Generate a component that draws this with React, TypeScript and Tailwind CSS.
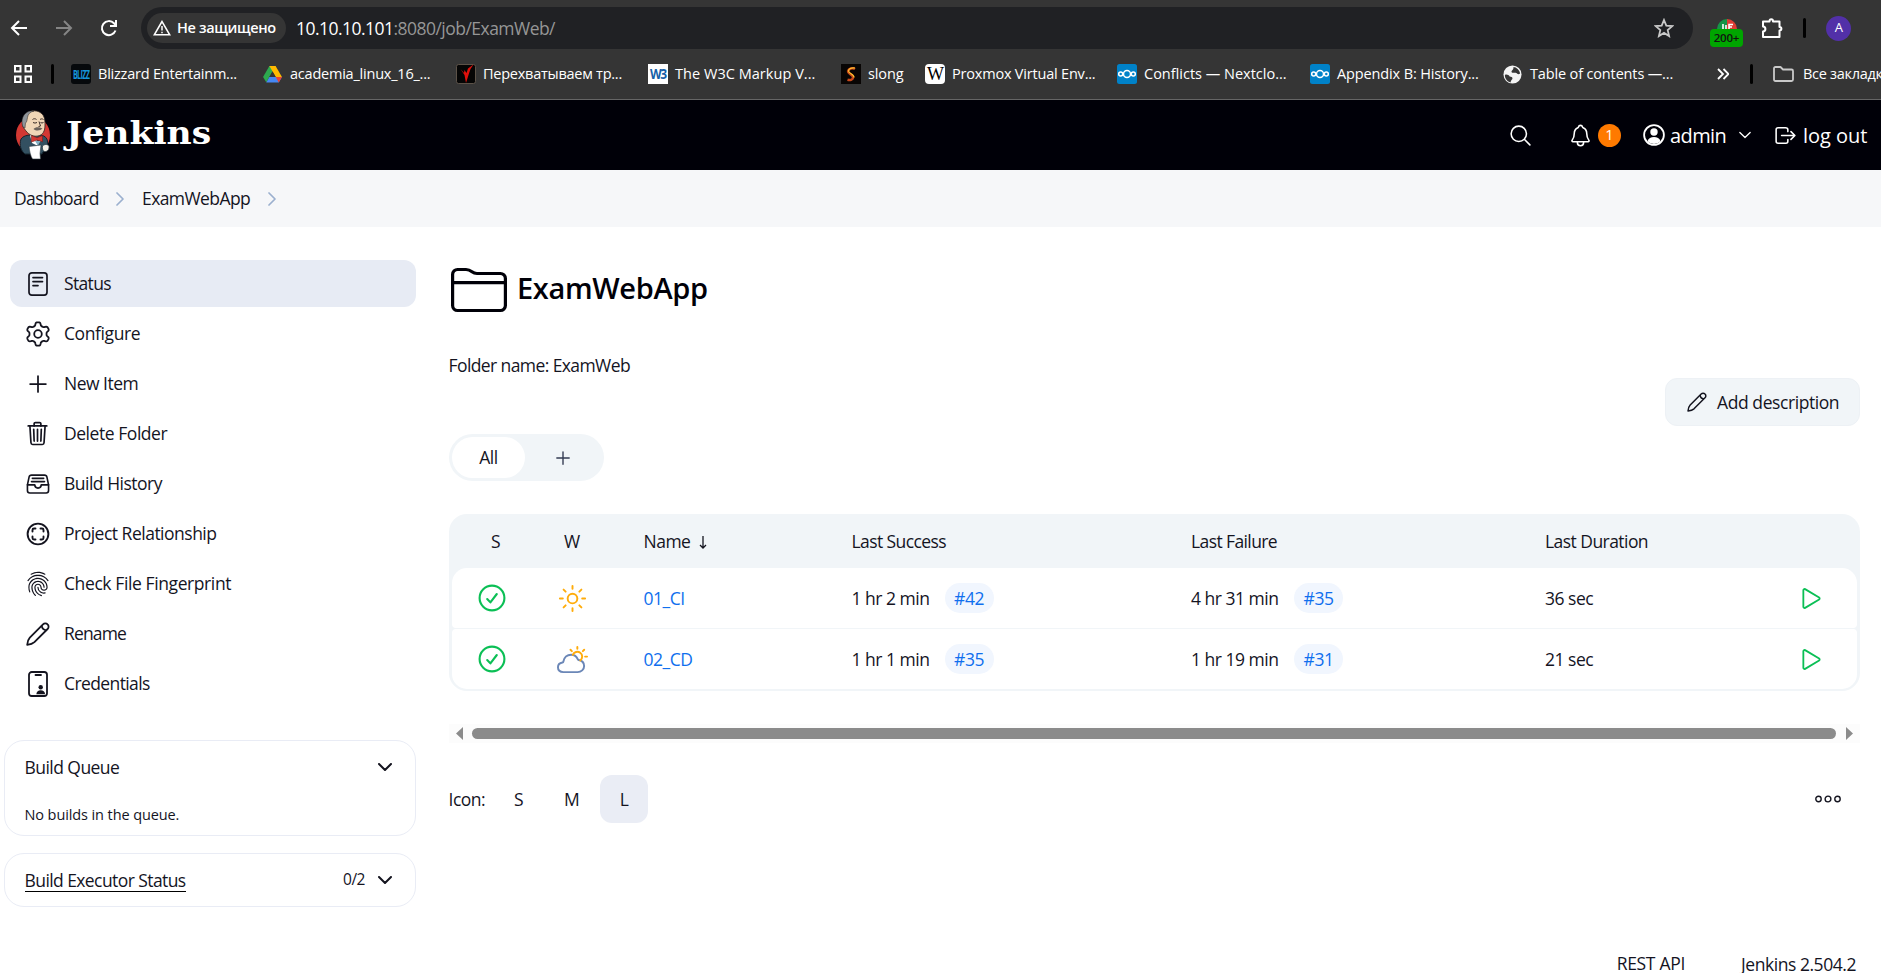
import type { ReactNode } from "react";
import {
  IoAddOutline,
  IoFileTrayFullOutline,
  IoFingerPrintOutline,
  IoLogOutOutline,
  IoNotificationsOutline,
  IoPartlySunnyOutline,
  IoPlayOutline,
  IoSearchOutline,
  IoSunnyOutline,
  IoTrashOutline,
} from "react-icons/io5";

/* ---------- icons ---------- */

function Pencil({ className }: { className: string }) {
  return (
    <svg viewBox="0 0 24 24" fill="none" stroke="currentColor" strokeWidth="1.8" strokeLinejoin="round" className={className}>
      <path d="M1.2 22.8c.3-3.200 1.100-5.600 2.600-7.200L17 2.400a3.200 3.200 0 0 1 4.600 0 3.200 3.200 0 0 1 0 4.600L8.400 20.200c-1.600 1.500-4 2.300-7.200 2.600z" />
      <path d="M15.700 3.700c.3 2.600 2 4.300 4.600 4.600" />
    </svg>
  );
}

/* Six-lobed gear outline, sampled around the circle. */
const gearPath =
  Array.from({ length: 120 }, (_, i) => {
    const a = (i / 120) * Math.PI * 2;
    const r = 10.1 - 1.6 * Math.tanh(2.2 * Math.cos(6 * a));
    return `${i === 0 ? "M" : "L"}${(13 + r * Math.cos(a)).toFixed(2)} ${(13 + r * Math.sin(a)).toFixed(2)}`;
  }).join("") + "Z";

function GearIcon() {
  return (
    <svg viewBox="0 0 26 26" fill="none" stroke="currentColor" strokeWidth="1.8" strokeLinejoin="round" className="size-[26px]">
      <path d={gearPath} />
      <circle cx="13" cy="13" r="3.800" />
    </svg>
  );
}

function StatusIcon() {
  return (
    <svg viewBox="0 0 24 24" fill="none" stroke="currentColor" strokeWidth="1.7" strokeLinecap="round" className="size-6">
      <rect x="3" y="0.900" width="18" height="22.200" rx="2.800" />
      <path d="M7 5.600h9.500M7 9.600h9.500M7 13.600h5" />
    </svg>
  );
}

function RelationshipIcon() {
  return (
    <svg viewBox="0 0 24 24" fill="none" stroke="currentColor" strokeWidth="1.9" strokeLinecap="round" strokeLinejoin="round" className="size-6">
      <circle cx="12" cy="12" r="10.400" />
      <path d="M6.500 9.500V8Q6.500 6.500 8 6.500h1.500M14.500 6.500H16Q17.500 6.500 17.500 8v1.500M17.500 14.500V16q0 1.500-1.500 1.500h-1.500M9.500 17.500H8Q6.500 17.500 6.500 16v-1.500" />
    </svg>
  );
}

function CredentialsIcon() {
  return (
    <svg viewBox="0 0 24 26" fill="none" stroke="currentColor" strokeWidth="1.800" strokeLinecap="round" className="h-[26px] w-6">
      <rect x="3" y="1" width="18" height="24" rx="2.800" />
      <path d="M9.500 4h5.500" />
      <circle cx="14.700" cy="16.200" r="2.200" fill="currentColor" stroke="none" />
      <path d="M10.300 23.200c.2-2.800 2-4 4.400-4s4.200 1.200 4.400 4z" fill="currentColor" stroke="none" />
    </svg>
  );
}

function FolderIcon() {
  return (
    <svg viewBox="0 0 58 46" fill="none" stroke="currentColor" strokeWidth="3.200" strokeLinejoin="round" className="h-[46px] w-[58px]">
      <path d="M2.600 38.500V7.500a5 5 0 0 1 5-5H16c3 0 4 .7 6 2.300 1.800 1.400 2.800 1.700 5 1.700h23.400a5 5 0 0 1 5 5v27a5 5 0 0 1-5 5H7.600a5 5 0 0 1-5-5z" />
      <path d="M2.600 15.600h52.800" />
    </svg>
  );
}

function Chevron({ className }: { className: string }) {
  return (
    <svg viewBox="0 0 14 8" fill="none" stroke="currentColor" strokeLinecap="round" strokeLinejoin="round" className={className}>
      <path d="M1 1l6 6 6-6" />
    </svg>
  );
}

function CrumbChevron() {
  return (
    <svg viewBox="0 0 8 14" fill="none" stroke="#9bb0cf" strokeWidth="1.700" strokeLinecap="round" strokeLinejoin="round" className="h-3.5 w-2">
      <path d="M1 1l6 6-6 6" />
    </svg>
  );
}

function CheckCircle() {
  return (
    <svg viewBox="0 0 28 28" fill="none" stroke="#0bbf55" strokeWidth="2.100" strokeLinecap="round" strokeLinejoin="round" className="size-7">
      <circle cx="14" cy="14" r="12.400" />
      <path d="M9.200 15l3.200 3.400L18.800 10" />
    </svg>
  );
}

function JenkinsLogo() {
  return (
    <svg viewBox="0 0 36 50" className="h-[50px] w-9">
      <ellipse cx="18" cy="25" rx="17" ry="18" fill="#d33833" />
      <path d="M6 29c2-3 6-4 10-4h10c4 1 6 3 6.500 6l.5 8-5 3-1 2H10C6 41 4 35 6 29z" fill="#335061" stroke="#14242e" strokeWidth="1" />
      <path d="M9.500 19C7 17 6.500 9 10 5c3-4 11-6 16-2 4 3 4 8 4 12 0 6-2 10-7 11-6 1-10-2-13.500-7z" fill="#f0d6b7" stroke="#2b2220" strokeWidth=".8" />
      <path d="M8 17C6 12 7 6 11 3c2-1.500 5-2.500 8-2-4 1-6 3-6.500 6.500C12 10 12 12 10.500 13L10 18z" fill="#8f959b" stroke="#2b2220" strokeWidth=".5" />
      <path d="M17.500 9.500c1-1 3-1 4 0M25 9.500c1-.8 2.500-.8 3.500 0M18 12.500q2 1.200 4 0M25.500 12.500q1.500 1 3 0M24 11.500l1.500 4.500-2 .6" fill="none" stroke="#3b2d28" strokeWidth="1" />
      <path d="M18.500 19c2-2 5-2.300 9-.5-2 2-6 3-9 .5z" fill="#6b625c" />
      <path d="M15 25l6 3 2 8-6-3z" fill="#fff" />
      <path d="M16.500 25.500l5.500 2.300 5.500-2.300v6.300L22 30l-5.500 2z" fill="#d33833" stroke="#7c1713" strokeWidth=".6" />
      <path d="M20 31l3 4.500 2.500-4.500z" fill="#81b0c4" />
      <path d="M14 36.500l12-1.500-1 8.500.5 5.500h-8c-2-3-3-8-3.500-12.500z" fill="#fff" stroke="#2d3b42" strokeWidth=".6" />
      <path d="M27.500 36c2-2 5-2 6.500 0 .5 3-1 5-3 5.500-2 .2-4-.5-3.500-5.500z" fill="#f5f1ea" stroke="#2d3b42" strokeWidth=".8" />
    </svg>
  );
}

function NextcloudIcon() {
  return (
    <svg viewBox="0 0 20 20" className="size-5">
      <rect width="20" height="20" rx="2.500" fill="#0082c9" />
      <g fill="none" stroke="#fff" strokeWidth="1.500">
        <circle cx="10" cy="10" r="3.500" />
        <circle cx="3.700" cy="10" r="2" />
        <circle cx="16.300" cy="10" r="2" />
      </g>
    </svg>
  );
}

function DriveIcon() {
  return (
    <svg viewBox="0 0 20 18" className="h-[17px] w-[19px]">
      <path d="M6.700 0h6.600L10 5.800 3.400 17.300 0 11.600z" fill="#2da94f" />
      <path d="M6.700 0h6.600L20 11.600h-6.600z" fill="#ffba00" />
      <path d="M6.700 11.600H20l-3.400 5.800H3.400z" fill="#4688f4" />
      <path d="M13.400 11.600H20l-3.400 5.800z" fill="#ea4335" />
      <path d="M10 5.800l-3.300 5.800h6.700z" fill="#353535" />
    </svg>
  );
}

function RedBirdIcon() {
  return (
    <svg viewBox="0 0 20 20" className="size-5">
      <rect x=".5" y=".5" width="19" height="19" rx="2" fill="#050505" stroke="#5c5248" />
      <path d="M4.500 5l3.500 4 .5-3 2 3L12 4.500 17.500.5 14.500 5 12.500 11 10 19l-1.500-8z" fill="#e0100c" />
    </svg>
  );
}

function FlameIcon() {
  return (
    <svg viewBox="0 0 20 20" className="size-5">
      <rect width="20" height="20" fill="#080504" />
      <path d="M14 5C11.500 3.500 7.500 4.500 7 7.300c-.4 2.700 5.500 3.400 5 6.500-.3 2-3 2.800-5.500 2" fill="none" stroke="#c9481a" strokeWidth="2.500" />
      <path d="M14 4C10 3.500 7.500 5 7.500 7c0 2.500 6 3.500 5.500 6.500" fill="none" stroke="#ffc130" strokeWidth="1.200" />
    </svg>
  );
}

function GlobeIcon() {
  return (
    <svg viewBox="0 0 20 20" className="size-[19px]">
      <circle cx="10" cy="10" r="9.500" fill="#f4f4f4" />
      <path d="M2 10.500c2-1 4 .2 5 1.500 1.500.5 3 .3 3 2 0 1.500-2 2-2 4.300C4.500 17.500 2 14.500 2 10.500zM11 2c3 .2 6.500 3 7 7-2 1.500-3 .2-4-.5-1.500-1-4 .5-5-1.200C8.500 5.500 11.500 5 11 2z" fill="#353535" />
    </svg>
  );
}

function LetterIcon({ className, children }: { className: string; children: ReactNode }) {
  return <span className={`flex size-5 items-center justify-center overflow-hidden ${className}`}>{children}</span>;
}

/* ---------- browser chrome ---------- */

const bookmarks: { label: string; width: string; text: string; icon: ReactNode }[] = [
  {
    label: "Blizzard Entertainm...",
    width: "w-[192px]",
    text: "tracking-[-0.22px]",
    icon: (
      <LetterIcon className="rounded-[3px] bg-[#06090c]">
        <span className="scale-x-90 scale-y-150 text-[8px] font-bold tracking-[-0.7px] text-[#1596dc]">BLIZZ</span>
      </LetterIcon>
    ),
  },
  { label: "academia_linux_16_...", width: "w-[193px]", text: "tracking-[-0.22px]", icon: <DriveIcon /> },
  { label: "Перехватываем тр...", width: "w-[192px]", text: "tracking-[-0.25px]", icon: <RedBirdIcon /> },
  {
    label: "The W3C Markup V...",
    width: "w-[193px]",
    text: "tracking-[0.04px]",
    icon: (
      <LetterIcon className="bg-white">
        <span className="scale-y-125 text-[12px] font-bold tracking-[-1.2px] text-[#1560a8]">W3</span>
      </LetterIcon>
    ),
  },
  { label: "slong", width: "w-[84px]", text: "tracking-[-0.1px]", icon: <FlameIcon /> },
  {
    label: "Proxmox Virtual Env...",
    width: "w-[192px]",
    text: "tracking-[-0.2px]",
    icon: (
      <LetterIcon className="rounded-[4px] bg-white">
        <span className="font-['Liberation_Serif',serif] text-[18px] tracking-[-1px] text-black">W</span>
      </LetterIcon>
    ),
  },
  { label: "Conflicts — Nextclo...", width: "w-[193px]", text: "tracking-[0px]", icon: <NextcloudIcon /> },
  { label: "Appendix B: History...", width: "w-[193px]", text: "tracking-[-0.13px]", icon: <NextcloudIcon /> },
  { label: "Table of contents —...", width: "w-[212px]", text: "tracking-[-0.15px]", icon: <GlobeIcon /> },
];

function BrowserChrome() {
  return (
    <div className="h-[100px] border-b border-[#666] bg-[#353535] text-white">
      <div className="flex h-14 items-center pl-2.5">
        <svg viewBox="0 0 18 18" fill="none" stroke="currentColor" strokeWidth="2" className="size-[18px]">
          <path d="M17 9H2M9 2L2 9l7 7" />
        </svg>
        <svg viewBox="0 0 18 18" fill="none" stroke="#858585" strokeWidth="2" className="ml-[27px] size-[18px]">
          <path d="M1 9h15M9 2l7 7-7 7" />
        </svg>
        <svg viewBox="0 0 18 18" fill="none" stroke="currentColor" strokeWidth="2" className="ml-[27px] size-[18px]">
          <path d="M15.500 11.500A7 7 0 1 1 14 4.300L16 6.500" />
          <path d="M16 1v6h-6" />
        </svg>
        <div className="ml-[23px] flex h-[42px] w-[1552px] items-center rounded-full bg-[#202124] pl-[6px]">
          <div className="flex h-[30px] w-[139px] items-center rounded-full bg-[#353535] pl-[6px]">
            <svg viewBox="0 0 18 16" fill="none" stroke="currentColor" strokeWidth="1.500" className="h-[16px] w-[18px]">
              <path d="M9 1.500L1.300 14.800h15.400z" />
              <path d="M9 6v4.500M9 11.700v1.600" />
            </svg>
            <span className="ml-[6px] text-[14.500px] font-semibold tracking-[-0.350px] whitespace-nowrap">Не защищено</span>
          </div>
          <span className="ml-[10px] pt-px text-[17.500px] tracking-[-0.530px] whitespace-nowrap">
            10.10.10.101<span className="text-[#969696]">:8080/job/ExamWeb/</span>
          </span>
          <svg viewBox="0 0 20 20" fill="none" stroke="#c9c9c9" strokeWidth="1.800" className="mr-[19px] ml-auto size-5">
            <path d="M10 2l2.300 5.600 6 .5-4.600 4 1.400 5.900L10 14.900 4.900 18l1.400-5.900-4.600-4 6-.5z" />
          </svg>
        </div>
        <div className="mt-[9px] ml-[17px] flex h-[28px] w-[33px] flex-col items-center">
          <svg viewBox="0 0 20 10" className="h-[10px] w-5 shrink-0">
            <path d="M0 10A10 10 0 0 1 10 0v10z" fill="#159447" />
            <path d="M10 0a10 10 0 0 1 10 10H10z" fill="#dd3d35" />
            <path d="M6 5v5M9 10V6M12 10V5.500h4M12 8h3" stroke="#fff" strokeWidth="1.600" fill="none" />
          </svg>
          <span className="flex h-[18px] w-full shrink-0 items-center justify-center rounded-[4px] bg-[#00a500] text-[11.500px] font-semibold tracking-[-0.200px] text-[#111]">200+</span>
        </div>
        <svg viewBox="0 0 22 22" fill="none" stroke="currentColor" strokeWidth="2" strokeLinejoin="round" className="ml-[18px] size-[22px]">
          <path d="M2 4.500h6.500c0-3 3.500-3 3.500 0h6.500V10c2.500 0 2.500 3.500 0 3.500V20H2v-5.500c3.200-.2 3.200-4.800 0-5z" />
        </svg>
        <span className="ml-[20px] h-5 w-[3px] rounded-full bg-black" />
        <span className="ml-5 flex size-[25px] items-center justify-center rounded-full bg-[#5230a8] text-[13px]">A</span>
      </div>
      <div className="flex h-[36px] items-center overflow-hidden pl-[14px] text-[14.500px] whitespace-nowrap">
        <svg viewBox="0 0 18 18" fill="none" stroke="currentColor" strokeWidth="2" className="size-[18px] shrink-0">
          <path d="M1 1h5.500v5.500H1zM11.500 1H17v5.500h-5.500zM1 11.500h5.500V17H1zM11.500 11.500H17V17h-5.500z" />
        </svg>
        <span className="mr-[17px] ml-[19px] h-5 w-[3px] shrink-0 rounded-full bg-black" />
        {bookmarks.map((b) => (
          <span key={b.label} className={`flex shrink-0 items-center ${b.width}`}>
            <span className="flex w-[27px] shrink-0">{b.icon}</span>
            <span className={b.text}>{b.label}</span>
          </span>
        ))}
        <svg viewBox="0 0 12 12" fill="none" stroke="currentColor" strokeWidth="1.800" className="ml-[2px] h-3 w-3 shrink-0">
          <path d="M1 1l5 5-5 5M6.500 1l5 5-5 5" />
        </svg>
        <span className="ml-[21px] h-5 w-[3px] shrink-0 rounded-full bg-black" />
        <svg viewBox="0 0 21 16" fill="none" stroke="#c9c9c9" strokeWidth="1.800" strokeLinejoin="round" className="ml-5 h-4 w-[21px] shrink-0">
          <path d="M1 13.500v-11Q1 1 2.500 1h5l2.500 2.500h8.500Q20 3.500 20 5v8.500q0 1.500-1.500 1.500h-16Q1 15 1 13.500z" />
        </svg>
        <span className="ml-[9px] tracking-[-0.300px]">Все закладки</span>
      </div>
    </div>
  );
}

/* ---------- Jenkins page ---------- */

function Header() {
  return (
    <header className="flex h-[70px] items-center bg-[#000008] pl-[15px] text-white">
      <JenkinsLogo />
      <span className="ml-[15px] origin-left scale-x-108 pb-1 font-['DejaVu_Serif',serif] text-[32px] font-bold tracking-[0px]">Jenkins</span>
      <div className="ml-auto flex items-center text-[20px] whitespace-nowrap">
        <IoSearchOutline className="size-[25px]" />
        <IoNotificationsOutline className="ml-[35px] size-[25px]" />
        <span className="ml-[5px] flex size-[23px] items-center justify-center rounded-full bg-[#ff7a00] text-[14.500px] tracking-[0px]">1</span>
        <svg viewBox="0 0 22 22" className="ml-[22px] size-[22px]">
          <circle cx="11" cy="11" r="9.900" fill="none" stroke="currentColor" strokeWidth="1.800" />
          <circle cx="11" cy="8" r="3.700" fill="currentColor" />
          <path d="M4.500 17.200c.8-3 3.500-4.200 6.500-4.200s5.700 1.200 6.500 4.200A9.400 9.400 0 0 1 11 20a9.400 9.400 0 0 1-6.500-2.800z" fill="currentColor" />
        </svg>
        <span className="ml-[5px] w-[69px] pt-[2px] tracking-[-0.600px]">admin</span>
        <Chevron className="h-[8px] w-[12px] stroke-[1.500]" />
        <IoLogOutOutline className="ml-[22px] size-[25px]" />
        <span className="ml-[5px] w-[78px] pt-[2px] tracking-[-0.050px]">log out</span>
      </div>
    </header>
  );
}

const tasks: { label: string; icon: ReactNode; text: string; active?: boolean }[] = [
  { label: "Status", icon: <StatusIcon />, text: "tracking-[-0.65px]", active: true },
  { label: "Configure", icon: <GearIcon />, text: "tracking-[-0.4px]" },
  { label: "New Item", icon: <IoAddOutline className="size-7 shrink-0" />, text: "tracking-[-0.5px]" },
  { label: "Delete Folder", icon: <IoTrashOutline className="size-[27px]" />, text: "tracking-[-0.45px]" },
  { label: "Build History", icon: <IoFileTrayFullOutline className="size-[26px]" />, text: "tracking-[-0.5px]" },
  { label: "Project Relationship", icon: <RelationshipIcon />, text: "tracking-[-0.5px]" },
  { label: "Check File Fingerprint", icon: <IoFingerPrintOutline className="size-[26px]" />, text: "tracking-[-0.4px]" },
  { label: "Rename", icon: <Pencil className="size-6" />, text: "tracking-[-0.85px]" },
  { label: "Credentials", icon: <CredentialsIcon />, text: "tracking-[-0.6px]" },
];

function Sidebar() {
  return (
    <aside className="w-[416px] shrink-0 pt-[33px]">
      <nav className="flex flex-col gap-[3px] pl-[10px]">
        {tasks.map((t) => (
          <a key={t.label} className={`flex h-[47px] items-center rounded-[12px] pl-[14px] ${t.active ? "bg-[#e7ebf4]" : ""}`}>
            <span className="flex w-[27px] justify-center">{t.icon}</span>
            <span className={`ml-[13px] ${t.text}`}>{t.label}</span>
          </a>
        ))}
      </nav>
      <section className="mt-[33px] ml-1 h-[96px] rounded-[20px] border border-[#e9ecf5] pr-[23px] pl-[19.500px]">
        <div className="flex h-[52px] items-center justify-between">
          <span className="tracking-[-0.550px]">Build Queue</span>
          <Chevron className="h-[8px] w-[14px] stroke-2" />
        </div>
        <p className="mt-[11px] text-[14.500px] tracking-[-0.100px]">No builds in the queue.</p>
      </section>
      <section className="mt-[17px] ml-1 flex h-[54px] items-center rounded-[20px] border border-[#e9ecf5] pr-[23px] pl-[19.500px]">
        <span className="mt-[2px] border-b border-black leading-[21px] tracking-[-0.580px]">Build Executor Status</span>
        <span className="ml-auto text-[15.500px]">0/2</span>
        <Chevron className="ml-[13px] h-[8px] w-[14px] stroke-2" />
      </section>
    </aside>
  );
}

function BuildPill({ children }: { children: ReactNode }) {
  return <a className="ml-[15px] inline-flex h-[30px] w-[49px] items-center justify-center rounded-full bg-[#f1f6fe] text-[#106fee]">{children}</a>;
}

const jobs = [
  { name: "01_CI", weather: <IoSunnyOutline className="size-[31px] text-[#ffac0b]" />, ok: "1 hr 2 min", okBuild: "#42", bad: "4 hr 31 min", badBuild: "#35", time: "36 sec" },
  { name: "02_CD", weather: <PartlyCloudy />, ok: "1 hr 1 min", okBuild: "#35", bad: "1 hr 19 min", badBuild: "#31", time: "21 sec" },
];

function PartlyCloudy() {
  return <IoPartlySunnyOutline className="size-[31px] text-[#ffac0b] [&_path:first-of-type]:stroke-[#6b87b7] [&_path:first-of-type]:text-[#6b87b7]" />;
}

const columns = "grid grid-cols-[76px_81px_97px_1fr] items-center";

function JobTable() {
  return (
    <div className="mt-[33px] h-[177px] rounded-[18px] bg-[#f1f5f8] px-[3px] pb-[2px]">
      <div className={`${columns} h-[54px]`}>
        <span className="pl-[39px]">S</span>
        <span className="pl-[36px]">W</span>
        <span className="pl-[34.500px] whitespace-nowrap">
          Name
          <svg viewBox="0 0 8 13" fill="none" stroke="currentColor" strokeWidth="1.300" className="mb-[2px] ml-[9px] inline h-[13px] w-2">
            <path d="M4 0v12M1 9l3 3 3-3" />
          </svg>
        </span>
        <div className="grid grid-cols-[339.500px_354px_1fr] pl-[145.500px]">
          <span className="tracking-[-0.580px]">Last Success</span>
          <span className="tracking-[-0.600px]">Last Failure</span>
          <span className="tracking-[-0.550px]">Last Duration</span>
        </div>
      </div>
      <div className="flex flex-col gap-px">
        {jobs.map((j, i) => (
          <div key={j.name} className={`${columns} h-[60px] bg-white ${i === 0 ? "rounded-t-[15px] rounded-b-[4px]" : "rounded-t-[4px] rounded-b-[15px]"}`}>
            <span className="pl-[26px]">
              <CheckCircle />
            </span>
            <span className="flex w-[88px] justify-center">{j.weather}</span>
            <a className="pl-[34.500px] text-[#106fee]">{j.name}</a>
            <div className="grid grid-cols-[339.500px_354px_1fr] items-center pl-[145.500px]">
              <span className="flex items-center">
                <span className="w-[78px] whitespace-nowrap">{j.ok}</span>
                <BuildPill>{j.okBuild}</BuildPill>
              </span>
              <span className="flex items-center">
                <span className="w-[88px] whitespace-nowrap">{j.bad}</span>
                <BuildPill>{j.badBuild}</BuildPill>
              </span>
              <span className="flex items-center justify-between pr-[31px]">
                {j.time}
                <IoPlayOutline className="size-[29px] text-[#0bbf55]" />
              </span>
            </div>
          </div>
        ))}
      </div>
    </div>
  );
}

function ScrollBar() {
  return (
    <div className="mt-[33px] flex h-[19px] items-center bg-[#fcfcfc] px-[7px]">
      <svg viewBox="0 0 7 13" className="h-[13px] w-[7px]">
        <path d="M7 0v13L0 6.500z" fill="#8b8b8b" />
      </svg>
      <span className="mr-[10px] ml-[9px] h-[11px] flex-1 rounded-full bg-[#8b8b8b]" />
      <svg viewBox="0 0 7 13" className="h-[13px] w-[7px]">
        <path d="M0 0v13l7-6.500z" fill="#8b8b8b" />
      </svg>
    </div>
  );
}

export default function App() {
  return (
    <div className="flex h-[973px] w-[1881px] flex-col overflow-hidden bg-white font-['Open_Sans','Noto_Sans',sans-serif] text-[17.500px] tracking-[-0.500px] text-[#14141f]">
      <BrowserChrome />
      <Header />
      <div className="flex h-[57px] shrink-0 items-center bg-[#f6f7f9] pl-[14px]">
        <span className="w-[102px] tracking-[-0.620px]">Dashboard</span>
        <CrumbChevron />
        <span className="ml-[18px] w-[126px] tracking-[-0.580px]">ExamWebApp</span>
        <CrumbChevron />
      </div>
      <div className="flex">
        <Sidebar />
        <main className="ml-[33px] flex h-[746px] w-[1411px] flex-col pt-[39px]">
          <div className="flex items-center text-[#000008]">
            <span className="mt-px mb-px ml-[1px]">
              <FolderIcon />
            </span>
            <h1 className="ml-[9px] pb-[5px] text-[29px] leading-[42px] font-semibold tracking-[-0.350px]">ExamWebApp</h1>
          </div>
          <p className="mt-[39px] mb-px -ml-[0.500px] leading-[24px] tracking-[-0.590px]">Folder name: ExamWeb</p>
          <button className="flex h-[48px] w-[195px] items-center self-end rounded-[12px] border border-[#edf1f5] bg-[#f1f5f8] pl-[21px]">
            <Pencil className="size-5" />
            <span className="ml-[10px] tracking-[-0.420px] whitespace-nowrap">Add description</span>
          </button>
          <div className="mt-[8px] flex h-[47px] w-[155px] items-center rounded-full bg-[#f1f5f8] p-[3px]">
            <span className="flex h-[41px] w-[73px] items-center justify-center rounded-full bg-white">All</span>
            <IoAddOutline className="ml-[27px] size-[22px] text-[#333b52]" />
          </div>
          <JobTable />
          <ScrollBar />
          <div className="mt-[32px] flex h-[48px] items-center">
            <span className="-ml-[0.500px] w-[65.500px]">Icon:</span>
            <span className="w-[50px]">S</span>
            <span className="w-[36px]">M</span>
            <span className="flex size-12 items-center justify-center rounded-[12px] bg-[#eaedf5]">L</span>
            <svg viewBox="0 0 26 8" fill="none" stroke="currentColor" strokeWidth="1.400" className="mr-[19px] ml-auto h-2 w-[26px]">
              <circle cx="3.500" cy="4" r="2.700" />
              <circle cx="13" cy="4" r="2.900" />
              <circle cx="22.500" cy="4" r="2.700" />
            </svg>
          </div>
          <footer className="mt-auto flex translate-y-[2px] items-end justify-end pr-[4px] leading-[20px]">
            <span className="mr-[56px] pb-[2px] tracking-[-0.300px]">REST API</span>
            <span className="pb-px tracking-[-0.450px]">Jenkins 2.504.2</span>
          </footer>
        </main>
      </div>
    </div>
  );
}
